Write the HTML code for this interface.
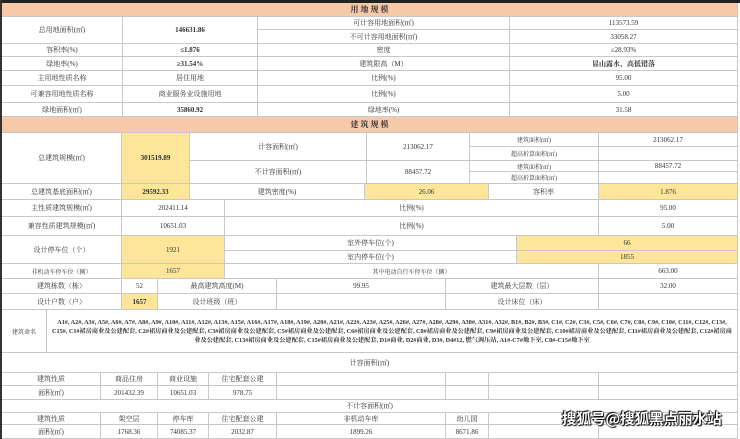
<!DOCTYPE html>
<html><head><meta charset="utf-8"><style>
body{margin:0;width:740px;height:439px;background:#fff;overflow:hidden;position:relative;font-family:"Liberation Serif","Noto Serif CJK SC",serif;color:#333}
.top{position:absolute;left:0;top:0;width:740px;height:3px;background:#222}
.lft{position:absolute;left:0;top:0;width:2px;height:439px;background:#333}
.c{position:absolute;box-sizing:border-box;border-right:1px solid #c8c8c8;border-bottom:1px solid #c8c8c8;display:flex;align-items:center;justify-content:center;font-size:7px;white-space:nowrap;text-align:center}
.y{background:#fde69a}
.h{background:#f6c9a8;font-weight:bold;font-size:8px}
.b{font-weight:bold}
.wm{position:absolute;left:562px;top:409px;white-space:nowrap;font-family:"Noto Sans CJK SC",sans-serif;font-size:14.5px;line-height:20px;font-weight:bold;color:#fff;text-shadow:0 0 1px #000,0 0 1px #000,1px 1px 1px #000,-1px -1px 1px #000}
</style></head><body>
<div class="top"></div><div class="lft"></div>
<div class="c h" style="left:2px;top:3px;width:736px;height:14px">用 地 规 模</div>
<div class="c" style="left:2px;top:17px;width:121px;height:27px">总用地面积(㎡)</div>
<div class="c b" style="left:123px;top:17px;width:135px;height:27px">146631.86</div>
<div class="c" style="left:258px;top:17px;width:252px;height:13px">可计容用地面积(㎡)</div>
<div class="c" style="left:510px;top:17px;width:228px;height:13px">113573.59</div>
<div class="c" style="left:258px;top:30px;width:252px;height:14px">不可计容用地面积(㎡)</div>
<div class="c" style="left:510px;top:30px;width:228px;height:14px">33058.27</div>
<div class="c" style="left:2px;top:44px;width:121px;height:13px">容积率(%)</div>
<div class="c b" style="left:123px;top:44px;width:135px;height:13px">≤1.876</div>
<div class="c" style="left:258px;top:44px;width:252px;height:13px">密度</div>
<div class="c" style="left:510px;top:44px;width:228px;height:13px">≤28.93%</div>
<div class="c" style="left:2px;top:57px;width:121px;height:14px">绿地率(%)</div>
<div class="c b" style="left:123px;top:57px;width:135px;height:14px">≥31.54%</div>
<div class="c" style="left:258px;top:57px;width:252px;height:14px">建筑限高（M）</div>
<div class="c b" style="left:510px;top:57px;width:228px;height:14px">显山露水、高低错落</div>
<div class="c" style="left:2px;top:71px;width:121px;height:15px">主用地性质名称</div>
<div class="c" style="left:123px;top:71px;width:135px;height:15px">居住用地</div>
<div class="c" style="left:258px;top:71px;width:252px;height:15px">比例(%)</div>
<div class="c" style="left:510px;top:71px;width:228px;height:15px">95.00</div>
<div class="c" style="left:2px;top:86px;width:121px;height:17px">可兼容用地性质名称</div>
<div class="c" style="left:123px;top:86px;width:135px;height:17px">商业服务业设施用地</div>
<div class="c" style="left:258px;top:86px;width:252px;height:17px">比例(%)</div>
<div class="c" style="left:510px;top:86px;width:228px;height:17px">5.00</div>
<div class="c" style="left:2px;top:103px;width:121px;height:14px">绿地面积(㎡)</div>
<div class="c b" style="left:123px;top:103px;width:135px;height:14px">35860.92</div>
<div class="c" style="left:258px;top:103px;width:252px;height:14px">绿地率(%)</div>
<div class="c" style="left:510px;top:103px;width:228px;height:14px">31.58</div>
<div class="c h" style="left:2px;top:117px;width:736px;height:16px">建 筑 规 模</div>
<div class="c" style="left:2px;top:133px;width:120px;height:51px">总建筑规模(㎡)</div>
<div class="c y b" style="left:122px;top:133px;width:68px;height:51px">301519.89</div>
<div class="c" style="left:190px;top:133px;width:177px;height:28px">计容面积(㎡)</div>
<div class="c" style="left:367px;top:133px;width:103px;height:28px">213062.17</div>
<div class="c" style="left:190px;top:161px;width:177px;height:23px">不计容面积(㎡)</div>
<div class="c" style="left:367px;top:161px;width:103px;height:23px">88457.72</div>
<div class="c" style="left:470px;top:133px;width:129px;height:14px;font-size:6px">建筑面积(㎡)</div>
<div class="c" style="left:599px;top:133px;width:139px;height:14px">213062.17</div>
<div class="c" style="left:470px;top:147px;width:129px;height:14px;font-size:6px">超高折算面积(㎡)</div>
<div class="c" style="left:599px;top:147px;width:139px;height:14px"></div>
<div class="c" style="left:470px;top:161px;width:129px;height:11px;font-size:6px">建筑面积(㎡)</div>
<div class="c" style="left:599px;top:161px;width:139px;height:11px">88457.72</div>
<div class="c" style="left:470px;top:172px;width:129px;height:12px;font-size:6px">超高折算面积(㎡)</div>
<div class="c" style="left:599px;top:172px;width:139px;height:12px"></div>
<div class="c" style="left:2px;top:184px;width:120px;height:16px">总建筑基底面积(㎡)</div>
<div class="c y b" style="left:122px;top:184px;width:68px;height:16px">29592.33</div>
<div class="c" style="left:190px;top:184px;width:175px;height:16px">建筑密度(%)</div>
<div class="c y" style="left:365px;top:184px;width:124px;height:16px">26.06</div>
<div class="c" style="left:489px;top:184px;width:110px;height:16px">容积率</div>
<div class="c y" style="left:599px;top:184px;width:139px;height:16px">1.876</div>
<div class="c" style="left:2px;top:200px;width:120px;height:17px">主性质建筑规模(㎡)</div>
<div class="c" style="left:122px;top:200px;width:103px;height:17px">202411.14</div>
<div class="c" style="left:225px;top:200px;width:374px;height:17px">比例(%)</div>
<div class="c" style="left:599px;top:200px;width:139px;height:17px">95.00</div>
<div class="c" style="left:2px;top:217px;width:120px;height:19px">兼容性质建筑规模(㎡)</div>
<div class="c" style="left:122px;top:217px;width:103px;height:19px">10651.03</div>
<div class="c" style="left:225px;top:217px;width:374px;height:19px">比例(%)</div>
<div class="c" style="left:599px;top:217px;width:139px;height:19px">5.00</div>
<div class="c" style="left:2px;top:236px;width:120px;height:28px">设计停车位（个）</div>
<div class="c y" style="left:122px;top:236px;width:103px;height:28px">1921</div>
<div class="c" style="left:225px;top:236px;width:292px;height:15px">室外停车位(个)</div>
<div class="c y" style="left:517px;top:236px;width:221px;height:15px">66</div>
<div class="c" style="left:225px;top:251px;width:292px;height:13px">室内停车位(个)</div>
<div class="c y" style="left:517px;top:251px;width:221px;height:13px">1855</div>
<div class="c" style="left:2px;top:264px;width:120px;height:15px;font-size:6px">非机动车停车位（辆）</div>
<div class="c y" style="left:122px;top:264px;width:103px;height:15px">1657</div>
<div class="c" style="left:225px;top:264px;width:374px;height:15px;font-size:6px">其中电动自行车停车位（辆）</div>
<div class="c" style="left:599px;top:264px;width:139px;height:15px">663.00</div>
<div class="c" style="left:2px;top:279px;width:120px;height:15px">建筑栋数（栋）</div>
<div class="c" style="left:122px;top:279px;width:36px;height:15px">52</div>
<div class="c" style="left:158px;top:279px;width:119px;height:15px">最高建筑高度(M)</div>
<div class="c" style="left:277px;top:279px;width:169px;height:15px">99.95</div>
<div class="c" style="left:446px;top:279px;width:153px;height:15px">建筑最大层数（层）</div>
<div class="c" style="left:599px;top:279px;width:139px;height:15px">32.00</div>
<div class="c" style="left:2px;top:294px;width:120px;height:16px">设计户数（户）</div>
<div class="c y b" style="left:122px;top:294px;width:36px;height:16px">1657</div>
<div class="c" style="left:158px;top:294px;width:119px;height:16px">设计班级（班）</div>
<div class="c" style="left:277px;top:294px;width:169px;height:16px"></div>
<div class="c" style="left:446px;top:294px;width:153px;height:16px">设计床位（床）</div>
<div class="c" style="left:599px;top:294px;width:139px;height:16px"></div>
<div class="c" style="left:2px;top:310px;width:45px;height:43px;font-size:6px">建筑命名</div>
<div class="c" style="left:47px;top:310px;width:691px;height:43px;white-space:normal;font-size:6.2px;line-height:9px;padding:0 2px;font-weight:bold">A1#, A2#, A3#, A5#, A6#, A7#, A8#, A9#, A10#, A11#, A12#, A13#, A15#, A16#, A17#, A18#, A19#, A20#, A21#, A22#, A23#, A25#, A26#, A27#, A28#, A29#, A30#, A31#, A32#, B1#, B2#, B3#, C1#, C2#, C3#, C5#, C6#, C7#, C8#, C9#, C10#, C11#, C12#, C13#, C15#, C1#裙房商业及公建配套, C2#裙房商业及公建配套, C3#裙房商业及公建配套, C5#裙房商业及公建配套, C6#裙房商业及公建配套, C8#裙房商业及公建配套, C9#裙房商业及公建配套, C10#裙房商业及公建配套, C11#裙房商业及公建配套, C12#裙房商业及公建配套, C13#裙房商业及公建配套, C15#裙房商业及公建配套, D1#商业, D2#商业, D3#, D4#12, 燃气调压站, A1#-C7#地下室, C8#-C15#地下室</div>
<div class="c" style="left:2px;top:353px;width:736px;height:20px">计容面积(㎡)</div>
<div class="c" style="left:2px;top:373px;width:99px;height:13px">建筑性质</div>
<div class="c" style="left:101px;top:373px;width:57px;height:13px">商品住房</div>
<div class="c" style="left:158px;top:373px;width:51px;height:13px">商业设施</div>
<div class="c" style="left:209px;top:373px;width:68px;height:13px">住宅配套公建</div>
<div class="c" style="left:277px;top:373px;width:169px;height:13px"></div>
<div class="c" style="left:446px;top:373px;width:43px;height:13px"></div>
<div class="c" style="left:489px;top:373px;width:110px;height:13px"></div>
<div class="c" style="left:599px;top:373px;width:139px;height:13px"></div>
<div class="c" style="left:2px;top:386px;width:99px;height:14px">面积(㎡)</div>
<div class="c" style="left:101px;top:386px;width:57px;height:14px">201432.39</div>
<div class="c" style="left:158px;top:386px;width:51px;height:14px">10651.03</div>
<div class="c" style="left:209px;top:386px;width:68px;height:14px">978.75</div>
<div class="c" style="left:277px;top:386px;width:169px;height:14px"></div>
<div class="c" style="left:446px;top:386px;width:43px;height:14px"></div>
<div class="c" style="left:489px;top:386px;width:110px;height:14px"></div>
<div class="c" style="left:599px;top:386px;width:139px;height:14px"></div>
<div class="c" style="left:2px;top:400px;width:736px;height:13px">不计容面积(㎡)</div>
<div class="c" style="left:2px;top:413px;width:99px;height:12px">建筑性质</div>
<div class="c" style="left:101px;top:413px;width:57px;height:12px">架空层</div>
<div class="c" style="left:158px;top:413px;width:51px;height:12px">停车库</div>
<div class="c" style="left:209px;top:413px;width:68px;height:12px">住宅配套公建</div>
<div class="c" style="left:277px;top:413px;width:169px;height:12px">非机动车库</div>
<div class="c" style="left:446px;top:413px;width:43px;height:12px">幼儿园</div>
<div class="c" style="left:489px;top:413px;width:110px;height:12px"></div>
<div class="c" style="left:599px;top:413px;width:139px;height:12px"></div>
<div class="c" style="left:2px;top:425px;width:99px;height:14px">面积(㎡)</div>
<div class="c" style="left:101px;top:425px;width:57px;height:14px">1768.36</div>
<div class="c" style="left:158px;top:425px;width:51px;height:14px">74085.37</div>
<div class="c" style="left:209px;top:425px;width:68px;height:14px">2032.87</div>
<div class="c" style="left:277px;top:425px;width:169px;height:14px">1899.26</div>
<div class="c" style="left:446px;top:425px;width:43px;height:14px">8671.86</div>
<div class="c" style="left:489px;top:425px;width:110px;height:14px"></div>
<div class="c" style="left:599px;top:425px;width:139px;height:14px"></div>
<div class="wm">搜狐号@搜狐黑点丽水站</div>
</body></html>
